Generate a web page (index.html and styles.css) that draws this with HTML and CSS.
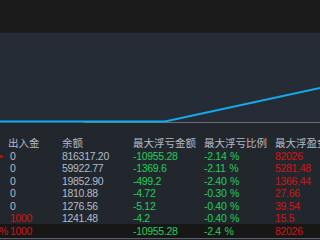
FILE: index.html
```html
<!DOCTYPE html>
<html>
<head>
<meta charset="utf-8">
<link rel="stylesheet" href="styles.css">
</head>
<body>
<div class="topbar"></div>
<div class="chart">
  <svg width="320" height="90" viewBox="0 0 320 90">
    <line x1="84" y1="89.5" x2="320" y2="89.5" stroke="#6a6e74" stroke-width="1"/>
    <polyline points="0,88.5 165,88.5 320,55" fill="none" stroke="#12aaea" stroke-width="2"/>
  </svg>
</div>
<div class="table">
  <div class="row head">
    <div class="c0"></div><div class="c1">出入金</div><div class="c2">余额</div><div class="c3">最大浮亏金额</div><div class="c4">最大浮亏比例</div><div class="c5">最大浮盈金额</div>
  </div>
  <div class="row">
    <div class="c0"><span class="dot"></span></div><div class="c1">0</div><div class="c2">816317.20</div><div class="c3 g">-10955.28</div><div class="c4 g">-2.14 %</div><div class="c5 r">82026</div>
  </div>
  <div class="row">
    <div class="c0"></div><div class="c1">0</div><div class="c2">59922.77</div><div class="c3 g">-1369.6</div><div class="c4 g">-2.11 %</div><div class="c5 r">5281.48</div>
  </div>
  <div class="row">
    <div class="c0"></div><div class="c1">0</div><div class="c2">19852.90</div><div class="c3 g">-499.2</div><div class="c4 g">-2.40 %</div><div class="c5 r">1366.44</div>
  </div>
  <div class="row">
    <div class="c0"></div><div class="c1">0</div><div class="c2">1810.88</div><div class="c3 g">-4.72</div><div class="c4 g">-0.30 %</div><div class="c5 r">27.66</div>
  </div>
  <div class="row">
    <div class="c0"></div><div class="c1">0</div><div class="c2">1276.56</div><div class="c3 g">-5.12</div><div class="c4 g">-0.40 %</div><div class="c5 r">39.54</div>
  </div>
  <div class="row">
    <div class="c0"></div><div class="c1 r">1000</div><div class="c2">1241.48</div><div class="c3 g">-4.2</div><div class="c4 g">-0.40 %</div><div class="c5 r">15.5</div>
  </div>
  <div class="row total">
    <div class="c0 r">%</div><div class="c1 r">1000</div><div class="c2"></div><div class="c3 g">-10955.28</div><div class="c4 g">-2.4 %</div><div class="c5 r">82026</div>
  </div>
</div>
</body>
</html>
```
FILE: styles.css
```css
html, body {
  margin: 0;
  padding: 0;
  width: 320px;
  height: 240px;
  overflow: hidden;
  background: #1c1c1c;
  font-family: "Liberation Sans", "Noto Sans CJK SC", sans-serif;
  font-size: 10.5px;
}
.topbar {
  height: 33px;
  background: #1b1b1b;
}
.chart {
  height: 90px;
  background: #262c36;
}
.chart svg {
  display: block;
}
.table {
  background: #22272e;
  padding-top: 14px;
  height: 117px;
  box-sizing: border-box;
  overflow: hidden;
}
.row {
  display: grid;
  grid-template-columns: 10px 52px 71px 71px 71px 45px;
  height: 12.5px;
  line-height: 12.5px;
  color: #b3bbc6;
  white-space: nowrap;
  letter-spacing: -0.3px;
}
.head {
  font-family: "Noto Sans CJK SC", sans-serif;
  font-size: 10.5px;
  letter-spacing: 0;
}
.head .c1 {
  margin-left: -2px;
}
.c0 {
  text-align: right;
}
.dot {
  display: inline-block;
  width: 3px;
  height: 3px;
  border-radius: 50%;
  background: #d01010;
  margin-right: 7px;
  vertical-align: middle;
}
.g { color: #1fcf5a; }
.r { color: #d41414; }
.c4 { word-spacing: 1px; }
.total {
  background: #171717;
  border-bottom: 1px solid #5c6168;
  height: 14px;
  line-height: 14px;
  margin-top: -0.75px;
}
.total .c0 {
  text-align: left;
  margin-left: -1px;
}
```
